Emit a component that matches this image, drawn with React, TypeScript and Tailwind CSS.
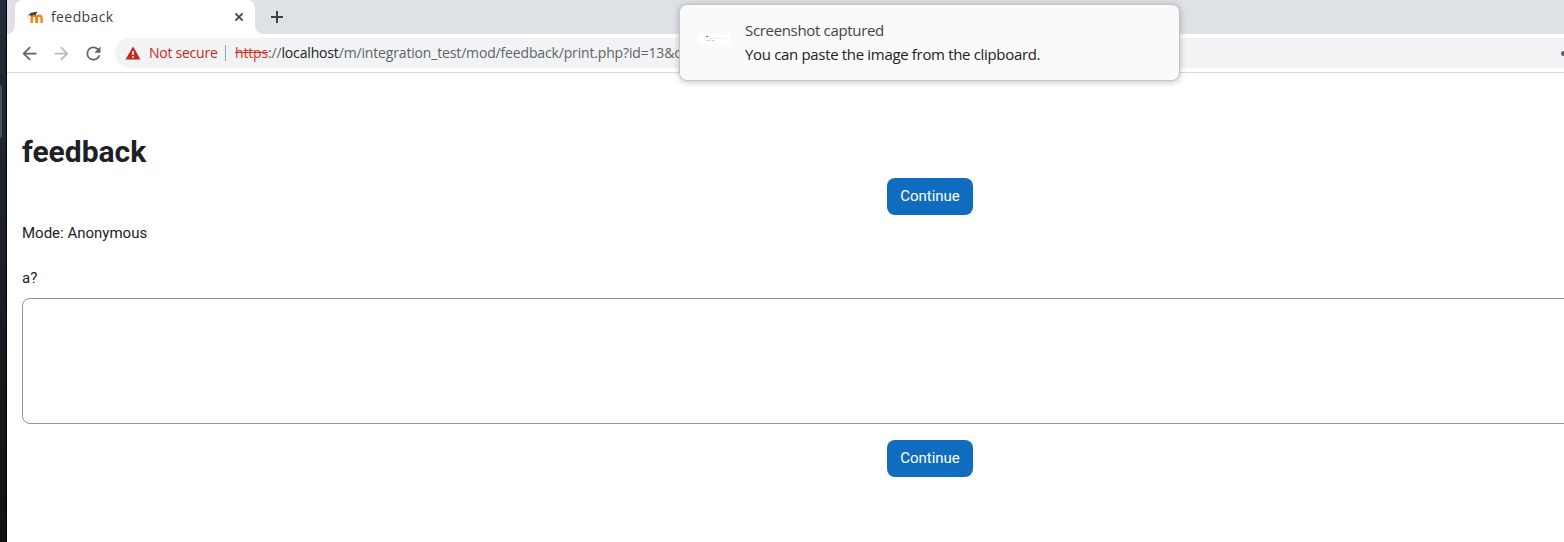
import type { ReactNode } from "react";

function MoodleIcon() {
  return (
    <svg className="h-4 w-4 shrink-0" viewBox="0 0 16 16" fill="none">
      <path d="M4.7 14V9a2.2 2.2 0 0 1 4.7 0V14M9.8 14V9a2.4 2.4 0 0 1 4.8 0V14" stroke="#f98012" strokeWidth="2.4" />
      <path d="M.8 6.3 4.5 3.4l5.9-.6-1.8 3.6c-1.6-.9-3.6-.3-4.3 1.3L3.7 6.4Z" fill="#4a4644" />
      <path d="M1 6.3v4" stroke="#d8b99a" strokeWidth=".6" />
    </svg>
  );
}

function ToolIcon({ d, color = "#5f6368" }: { d: string; color?: string }) {
  return (
    <svg className="h-[21px] w-[21px] shrink-0" viewBox="0 0 24 24" fill={color}>
      <path d={d} />
    </svg>
  );
}

function TabStrip() {
  return (
    <div className="flex h-[34px] bg-[#dee1e6]">
      <div className="flex w-2 bg-white">
        <div className="w-full rounded-br-lg bg-[#dee1e6]" />
      </div>
      <div className="flex w-60 items-center rounded-t-lg bg-white pl-3 pr-3">
        <MoodleIcon />
        <span className="ml-2 flex-1 pb-0.5 text-[14px] tracking-[0.4px] text-[#3c4043]">feedback</span>
        <svg className="h-2 w-2" viewBox="0 0 8 8" stroke="#3c4043" strokeWidth="1.7">
          <path d="m.4.4 7.2 7.2M7.6.4.4 7.6" />
        </svg>
      </div>
      <div className="flex flex-1 bg-white">
        <div className="flex flex-1 items-center rounded-bl-lg bg-[#dee1e6] pl-4">
          <svg className="h-3 w-3" viewBox="0 0 12 12" stroke="#3c4043" strokeWidth="2">
            <path d="M6 0v12M0 6h12" />
          </svg>
        </div>
      </div>
    </div>
  );
}

function Toolbar() {
  return (
    <div className="flex h-[39px] items-center border-b border-[#d9dadb] bg-white pl-[11.5px]">
      <ToolIcon d="M20 11H7.83l5.59-5.59L12 4l-8 8 8 8 1.41-1.41L7.83 13H20v-2z" />
      <div className="w-[11px]" />
      <ToolIcon color="#babcbe" d="m12 4-1.41 1.41L16.17 11H4v2h12.17l-5.58 5.59L12 20l8-8z" />
      <div className="w-[11px]" />
      <ToolIcon d="M17.65 6.35A7.96 7.96 0 0 0 12 4a8 8 0 1 0 7.73 10h-2.08A6 6 0 1 1 12 6c1.66 0 3.14.69 4.22 1.78L13 11h7V4l-2.35 2.35z" />
      <div className="ml-[11.5px] flex h-[30px] flex-1 items-center overflow-hidden rounded-l-full bg-[#f1f3f4] pl-[10px] text-[14px] whitespace-nowrap">
        <svg className="h-[14px] w-4 shrink-0" viewBox="0 0 16 14">
          <path d="M8 .5 15.5 13.5H.5Z" fill="#c5281c" />
          <path d="M8 5v4M8 10.3v1.6" stroke="#fff" strokeWidth="1.6" />
        </svg>
        <span className="ml-2 w-[69px] pb-0.5 tracking-[-0.25px] text-[#c5281c]">Not secure</span>
        <span className="ml-[7px] h-4 w-px bg-[#9aa0a6]" />
        <span className="ml-[9px] pb-0.5 tracking-[-0.16px] text-[#5f6368]">
          <span className="text-[#d93025] line-through">https</span>://
          <span className="text-[#202124]">localhost</span>
          /m/integration_test/mod/feedback/print.php?id=13&amp;c
        </span>
        <span className="mr-[-2px] ml-auto h-[5px] w-[5px] rounded-full bg-[#5f6368]" />
      </div>
    </div>
  );
}

function Notification() {
  return (
    <div className="absolute top-[4px] left-[679px] flex h-[77px] w-[501px] items-center rounded-lg border border-[#c5c5c5] bg-[#fafafa] pl-[18px] shadow-[0_1px_6px_rgba(0,0,0,0.25)]">
      <svg className="mb-[7px] h-[10px] w-8" viewBox="0 0 32 10">
        <path fill="#fff" d="M0 0h32v10H0z" />
        <path fill="#18a383" d="M8 2h2v1H8z" />
        <path fill="#a4d8ce" d="M11 2h1v1h-1z" />
        <path fill="#f2f3f4" d="M8 4h21v1H8z" />
        <path fill="#d2d4d5" d="M8 6h4v1H8zM13 6h4v1h-4z" />
      </svg>
      <div className="ml-[15px] pb-0.5 text-[15px] leading-6 tracking-[-0.33px] text-[#222]">
        <div className="text-[#444]">Screenshot captured</div>
        <div>You can paste the image from the clipboard.</div>
      </div>
    </div>
  );
}

function Continue({ children }: { children: ReactNode }) {
  return (
    <button className="mx-auto flex h-[37px] w-[86px] items-center justify-center rounded-lg bg-[#0f6cbf] pb-0.5 text-[15px] text-white">
      {children}
    </button>
  );
}

export default function App() {
  return (
    <div className="relative flex h-[542px] w-[1564px] overflow-hidden bg-white font-['Open_Sans',sans-serif]">
      <div className="w-[7px] shrink-0 border-r border-black bg-linear-to-b from-[#242c3b] via-[#1b1e23] to-[#101214] pt-[85px]">
        <div className="h-[53px] w-[2px] rounded-r-sm bg-[#4b5056]" />
      </div>
      <div className="flex min-w-0 flex-1 flex-col">
        <TabStrip />
        <Toolbar />
        <main className="flex flex-col overflow-hidden pl-[15px] font-[Roboto,sans-serif] text-[15px] leading-[22px] text-[#1d2125]">
          <h1 className="mt-[61px] text-[30px] leading-9 font-bold">feedback</h1>
          <div className="mt-2 w-[1816px]">
            <Continue>Continue</Continue>
          </div>
          <p className="mt-[7px]">Mode: Anonymous</p>
          <p className="mt-[23px]">a?</p>
          <div className="mt-[9px] h-[126px] w-[1816px] rounded-lg border border-[#8f959e]" />
          <div className="mt-4 w-[1816px]">
            <Continue>Continue</Continue>
          </div>
        </main>
      </div>
      <Notification />
    </div>
  );
}
